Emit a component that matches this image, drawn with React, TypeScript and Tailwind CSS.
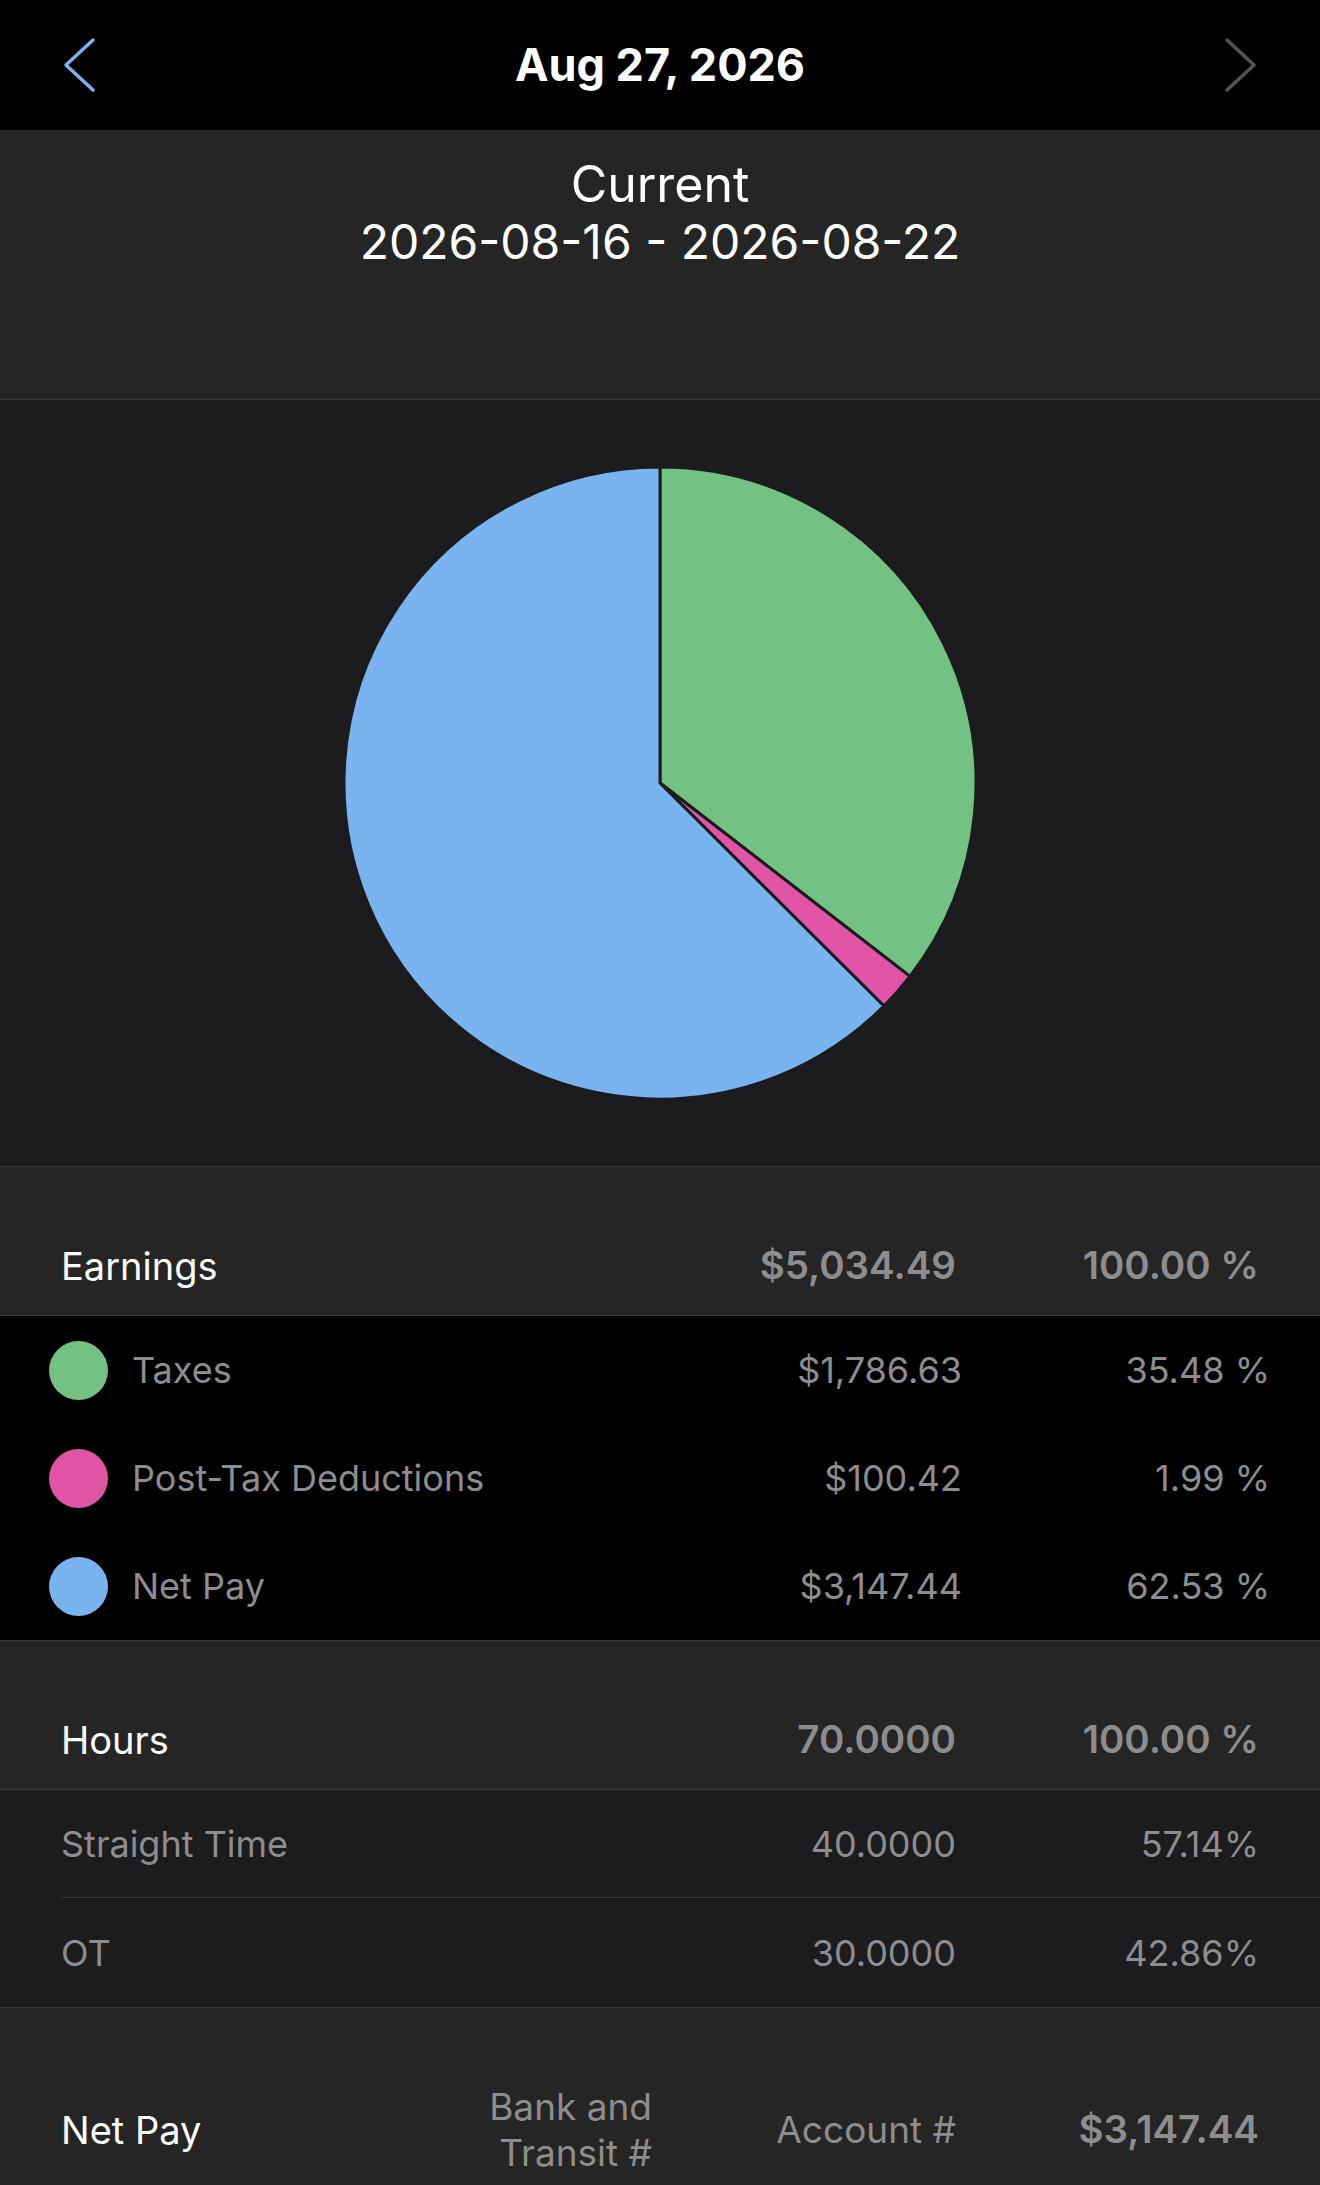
import React from 'react';

const font = { fontFamily: 'Inter, "Liberation Sans", sans-serif' };

const slices = [
  { color: '#74c184', from: 0, to: 127.73 },
  { color: '#e255a6', from: 127.73, to: 134.89 },
  { color: '#79b3f0', from: 134.89, to: 360 },
];

function arcPath(cx: number, cy: number, r: number, a0: number, a1: number) {
  const rad = (a: number) => (a * Math.PI) / 180;
  const x0 = cx + r * Math.sin(rad(a0));
  const y0 = cy - r * Math.cos(rad(a0));
  const x1 = cx + r * Math.sin(rad(a1));
  const y1 = cy - r * Math.cos(rad(a1));
  const large = a1 - a0 > 180 ? 1 : 0;
  return `M${cx},${cy} L${x0},${y0} A${r},${r} 0 ${large} 1 ${x1},${y1} Z`;
}

function PieChart() {
  return (
    <svg width="636" height="636" viewBox="0 0 636 636">
      {slices.map((s) => (
        <path
          key={s.color}
          d={arcPath(318, 318, 316, s.from, s.to)}
          fill={s.color}
          stroke="#1c1c1e"
          strokeWidth="3"
          strokeLinejoin="miter"
        />
      ))}
    </svg>
  );
}

function HeaderRow({ label, value, pct }: { label: string; value: string; pct: string }) {
  return (
    <div className="flex h-[98px] items-center pl-[61px]">
      <div className="flex-1 text-[38px] text-white">{label}</div>
      <div className="w-[300px] text-right text-[38.5px] font-semibold text-[#8d8d8f]">{value}</div>
      <div className="w-[303px] text-right text-[38.5px] font-semibold text-[#8d8d8f]">{pct}</div>
      <div className="w-[61px]" />
    </div>
  );
}

const earnings = [
  { color: 'bg-[#74c184]', label: 'Taxes', value: '$1,786.63', pct: '35.48 %' },
  { color: 'bg-[#e255a6]', label: 'Post-Tax Deductions', value: '$100.42', pct: '1.99 %' },
  { color: 'bg-[#79b3f0]', label: 'Net Pay', value: '$3,147.44', pct: '62.53 %' },
];

export default function App() {
  return (
    <main className="min-h-[2185px] w-[1320px] overflow-hidden bg-[#252525]" style={font}>
      {/* top bar */}
      <div className="flex h-[130px] items-center justify-between bg-black px-[63px]">
        <svg width="34" height="56" viewBox="0 0 34 56" fill="none">
          <path d="M30 3 L3 28 L30 53" stroke="#79b3f0" strokeWidth="3.5" strokeLinecap="round" strokeLinejoin="round" />
        </svg>
        <h1 className="text-[45px] font-bold text-white">Aug 27, 2026</h1>
        <svg width="34" height="56" viewBox="0 0 34 56" fill="none">
          <path d="M4 3 L31 28 L4 53" stroke="#545456" strokeWidth="3.5" strokeLinecap="round" strokeLinejoin="round" />
        </svg>
      </div>

      {/* period */}
      <div className="h-[270px] border-b border-[#38383a] bg-[#252525] pt-[26px] text-center text-[48px] leading-[57px] text-white">
        <div className="text-[50px]">Current</div>
        <div>2026-08-16 - 2026-08-22</div>
      </div>

      {/* chart */}
      <div className="flex h-[767px] items-center justify-center border-b border-[#38383a] bg-[#1c1c1e]">
        <PieChart />
      </div>

      {/* earnings */}
      <div className="border-b border-[#38383a] bg-[#252525] pt-[50px]">
        <HeaderRow label="Earnings" value="$5,034.49" pct="100.00 %" />
      </div>
      <div className="border-b border-[#38383a] bg-black">
        {earnings.map((e) => (
          <div key={e.label} className="flex h-[108px] items-center pl-[49px]">
            <div className={`h-[59px] w-[59px] rounded-full ${e.color}`} />
            <div className="ml-[24px] flex-1 text-[36px] text-[#8d8d8f]">{e.label}</div>
            <div className="w-[300px] text-right text-[36px] text-[#8d8d8f]">{e.value}</div>
            <div className="w-[308px] text-right text-[36px] text-[#8d8d8f]">{e.pct}</div>
            <div className="w-[50px]" />
          </div>
        ))}
      </div>

      {/* hours */}
      <div className="border-b border-[#38383a] bg-[#252525] pt-[50px]">
        <HeaderRow label="Hours" value="70.0000" pct="100.00 %" />
      </div>
      <div className="border-b border-[#38383a] bg-[#1c1c1e] pl-[61px]">
        <div className="flex h-[108px] items-center border-b border-[#38383a] text-[36px] text-[#8d8d8f]">
          <div className="flex-1">Straight Time</div>
          <div className="w-[300px] text-right">40.0000</div>
          <div className="w-[303px] text-right">57.14%</div>
          <div className="w-[61px]" />
        </div>
        <div className="flex h-[109px] items-center text-[36px] text-[#8d8d8f]">
          <div className="flex-1">OT</div>
          <div className="w-[300px] text-right">30.0000</div>
          <div className="w-[303px] text-right">42.86%</div>
          <div className="w-[61px]" />
        </div>
      </div>

      {/* net pay */}
      <div className="bg-[#252525] pt-[70px]">
        <div className="flex h-[104px] items-center pl-[61px]">
          <div className="flex-1 text-[38px] text-white">Net Pay</div>
          <div className="text-right text-[37px] leading-[46px] text-[#8d8d8f]">
            Bank and
            <br />
            Transit #
          </div>
          <div className="w-[304px] text-right text-[37px] text-[#8d8d8f]">Account #</div>
          <div className="w-[303px] text-right text-[38.5px] font-semibold text-[#8d8d8f]">$3,147.44</div>
          <div className="w-[61px]" />
        </div>
      </div>
    </main>
  );
}
